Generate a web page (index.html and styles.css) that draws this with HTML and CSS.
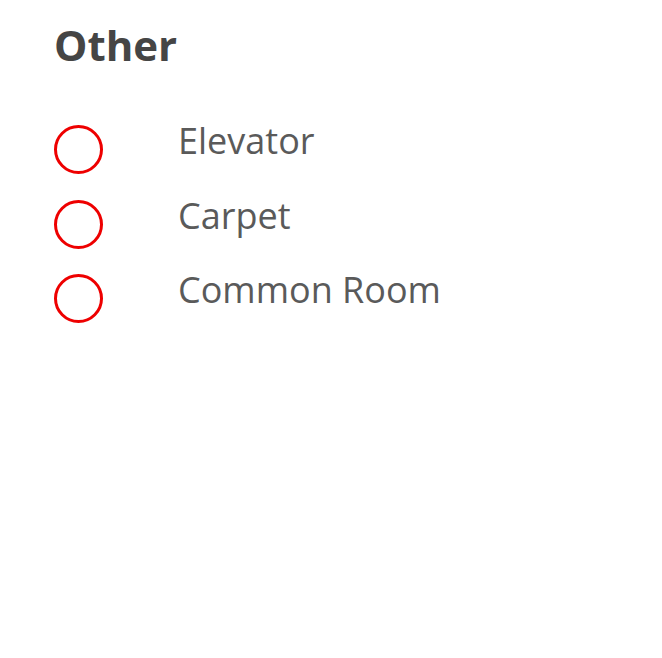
FILE: index.html
```html
<!DOCTYPE html>
<html>
<head>
<meta charset="utf-8">
<link rel="stylesheet" href="styles.css">
</head>
<body>
<section class="group">
  <h2 class="title">Other</h2>
  <ul class="options">
    <li class="option"><span class="radio"></span><span class="label">Elevator</span></li>
    <li class="option"><span class="radio"></span><span class="label">Carpet</span></li>
    <li class="option"><span class="radio"></span><span class="label">Common Room</span></li>
  </ul>
</section>
</body>
</html>
```
FILE: styles.css
```css
html, body {
  margin: 0;
  padding: 0;
  background: #ffffff;
}
body {
  font-family: "Open Sans", "Noto Sans", sans-serif;
}
.group {
  padding: 16px 0 0 54px;
}
.title {
  margin: 0;
  font-size: 42px;
  font-weight: 700;
  line-height: 57px;
  color: #454545;
}
.options {
  list-style: none;
  margin: 52px 0 0 0;
  padding: 0;
  display: flex;
  flex-direction: column;
  gap: 25.5px;
}
.option {
  display: flex;
  align-items: flex-start;
  gap: 75px;
  height: 49px;
}
.radio {
  box-sizing: border-box;
  width: 49px;
  height: 49px;
  border: 3.5px solid #ee0000;
  border-radius: 50%;
  flex: none;
}
.label {
  font-size: 36px;
  font-weight: 400;
  line-height: 48px;
  margin-top: -8px;
  color: #5a5a5a;
}
```
